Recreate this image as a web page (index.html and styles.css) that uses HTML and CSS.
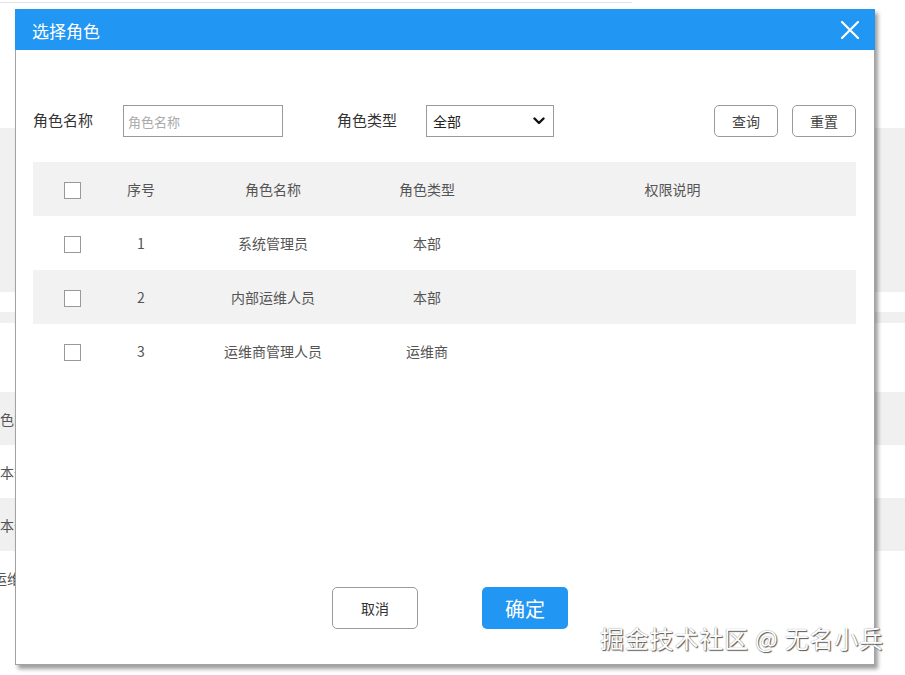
FILE: index.html
```html
<!DOCTYPE html>
<html lang="zh-CN">
<head>
<meta charset="utf-8">
<title>选择角色</title>
<link rel="stylesheet" href="styles.css">
</head>
<body>
<div class="bg-page">
  <div class="bg-topline"></div>
  <div class="bg-search"></div>
  <div class="bg-strip"></div>
  <div class="bg-table">
    <div class="bg-row alt"><div class="bg-cell"><span>角色类型</span></div></div>
    <div class="bg-row"><div class="bg-cell"><span>本部</span></div></div>
    <div class="bg-row alt"><div class="bg-cell"><span>本部</span></div></div>
    <div class="bg-row"><div class="bg-cell"><span>运维商</span></div></div>
  </div>
</div>

<div class="dialog">
  <div class="dialog-header">
    <span class="dialog-title">选择角色</span>
    <svg class="close-icon" width="18" height="18" viewBox="0 0 18 18">
      <path d="M1 1 L17 17 M17 1 L1 17" stroke="#fff" stroke-width="2.2" fill="none" stroke-linecap="round"/>
    </svg>
  </div>
  <div class="dialog-body">
    <div class="filter-row">
      <span class="filter-label label-name">角色名称</span>
      <input class="text-input" type="text" placeholder="角色名称">
      <span class="filter-label label-type">角色类型</span>
      <div class="fake-select">
        <span>全部</span>
        <svg width="12" height="8" viewBox="0 0 12 8"><polyline points="1.5,1.5 6,6 10.5,1.5" stroke="#111" stroke-width="2.4" fill="none" stroke-linecap="round" stroke-linejoin="round"/></svg>
      </div>
      <div class="filter-actions">
        <button class="btn-outline">查询</button>
        <button class="btn-outline">重置</button>
      </div>
    </div>
    <table class="role-table">
      <colgroup>
        <col class="c-chk"><col class="c-no"><col class="c-name"><col class="c-type"><col>
      </colgroup>
      <thead>
        <tr><th><span class="chk"></span></th><th>序号</th><th>角色名称</th><th>角色类型</th><th class="c-desc">权限说明</th></tr>
      </thead>
      <tbody>
        <tr><td><span class="chk"></span></td><td>1</td><td>系统管理员</td><td>本部</td><td class="c-desc"></td></tr>
        <tr class="alt"><td><span class="chk"></span></td><td>2</td><td>内部运维人员</td><td>本部</td><td class="c-desc"></td></tr>
        <tr><td><span class="chk"></span></td><td>3</td><td>运维商管理人员</td><td>运维商</td><td class="c-desc"></td></tr>
      </tbody>
    </table>
  </div>
  <div class="dialog-footer">
    <button class="btn-cancel">取消</button>
    <button class="btn-confirm">确定</button>
  </div>
</div>

<div class="watermark">掘金技术社区 @ 无名小兵</div>
</body>
</html>
```

FILE: styles.css
```css
* { box-sizing: border-box; }
body {
  margin: 0;
  width: 905px;
  height: 675px;
  overflow: hidden;
  position: relative;
  background: #fff;
  font-family: "Noto Sans CJK SC", "Microsoft YaHei", sans-serif;
  color: #333;
}

/* background page */
.bg-topline { margin-top: 2px; width: 632px; height: 1px; background: #e2e2e2; }
.bg-search { margin-top: 125px; height: 164px; background: #f0f0f0; }
.bg-strip { margin-top: 20px; height: 11px; background: #f0f0f0; }
.bg-table { margin-top: 69px; }
.bg-row { height: 53px; display: flex; align-items: center; }
.bg-row.alt { background: #f0f0f0; }
.bg-cell {
  width: 28px;
  display: flex;
  justify-content: center;
  white-space: nowrap;
  font-size: 14px;
  color: #555;
}

/* dialog */
.dialog {
  position: absolute;
  left: 15px;
  top: 9px;
  width: 860px;
  height: 656px;
  background: #fff;
  border: 1px solid #a3a3a3;
  border-top: none;
  box-shadow: 3px 4px 4px rgba(0, 0, 0, 0.38);
  display: flex;
  flex-direction: column;
}
.dialog-header {
  height: 41px;
  margin: 0 -1px;
  background: #2196f3;
  display: flex;
  align-items: center;
  justify-content: space-between;
  padding: 1px 16px 0 17px;
}
.dialog-title { color: #fff; font-size: 17px; }
.close-icon { display: block; margin-top: -1px; }

.dialog-body { padding: 55px 18px 0 17px; }
.filter-row { display: flex; align-items: center; height: 32px; }
.filter-label { font-size: 15px; color: #333; white-space: nowrap; line-height: 20px; margin-top: -3px; }
.label-name { margin-right: 30px; }
.label-type { margin-right: 29px; }
.text-input {
  width: 160px;
  height: 32px;
  border: 1px solid #9a9a9a;
  padding: 0 4px;
  font-family: inherit;
  font-size: 13px;
  margin-right: 54px;
  outline: none;
}
.text-input::placeholder { color: #aaa; }
.fake-select {
  width: 128px;
  height: 32px;
  border: 1px solid #9a9a9a;
  display: flex;
  align-items: center;
  justify-content: space-between;
  padding: 0 8px 0 6px;
  font-size: 14px;
  color: #222;
}
.fake-select svg { display: block; }
.filter-actions { margin-left: auto; display: flex; gap: 14px; }
.btn-outline {
  width: 64px;
  height: 32px;
  background: #fff;
  border: 1px solid #9a9a9a;
  border-radius: 5px;
  font-family: inherit;
  font-size: 14px;
  color: #444;
  padding: 0;
}

.role-table {
  margin-top: 25px;
  width: 823px;
  border-collapse: collapse;
  table-layout: fixed;
  font-size: 14px;
  color: #555;
}
.c-chk { width: 78px; }
.c-no { width: 60px; }
.c-name { width: 204px; }
.c-type { width: 104px; }
.role-table th, .role-table td {
  height: 54px;
  padding: 0;
  text-align: center;
  font-weight: normal;
  vertical-align: middle;
}
.role-table th.c-desc, .role-table td.c-desc { padding-left: 10px; }
.role-table thead tr, .role-table tr.alt { background: #f2f2f2; }
.chk {
  display: inline-block;
  width: 17px;
  height: 17px;
  border: 1px solid #999;
  background: #fff;
  vertical-align: middle;
}

.dialog-footer {
  margin-top: auto;
  display: flex;
  justify-content: center;
  gap: 64px;
  padding: 0 0 35px 10px;
}
.btn-cancel {
  width: 86px;
  height: 42px;
  background: #fff;
  border: 1px solid #9a9a9a;
  border-radius: 5px;
  font-family: inherit;
  font-size: 14px;
  color: #333;
  padding: 0;
}
.btn-confirm {
  width: 86px;
  height: 42px;
  background: #2196f3;
  border: none;
  border-radius: 5px;
  font-family: inherit;
  font-size: 20px;
  color: #fff;
  padding: 0;
}

.watermark {
  position: absolute;
  left: 600px;
  top: 623px;
  line-height: 30px;
  font-size: 24px;
  letter-spacing: 0.8px;
  color: #fff;
  white-space: nowrap;
  text-shadow: 1px 1px 1px #555, 0 0 1px #777;
}
```
